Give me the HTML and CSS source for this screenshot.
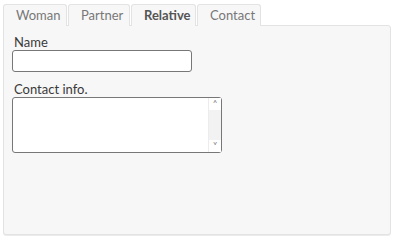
FILE: index.html
```html
<!DOCTYPE html>
<html>
<head>
<meta charset="utf-8">
<link rel="stylesheet" href="styles.css">
</head>
<body>
<div class="tabs">
  <div class="tablist">
    <div class="tab">Woman</div>
    <div class="tab">Partner</div>
    <div class="tab active">Relative</div>
    <div class="tab">Contact</div>
  </div>
  <div class="panel">
    <label class="label">Name</label>
    <input class="input" type="text">
    <label class="label label2">Contact info.</label>
    <div class="textarea">
      <div class="scroll">
        <span class="arrow">&#x2C4;</span>
        <span class="track"></span>
        <span class="arrow">&#x2C5;</span>
      </div>
    </div>
  </div>
</div>
</body>
</html>
```
FILE: styles.css
```css
* { box-sizing: border-box; }
html, body { margin: 0; background: #fff; }
body { padding: 3px 4px 5px 3px; font-family: Lato, "Open Sans", sans-serif; font-size: 13px; color: #444; }
.tabs { display: flex; flex-direction: column; height: 232px; }
.tablist { display: flex; padding-left: 0; }
.tab {
  height: 22px; padding: 0 12px; margin-right: 1px;
  border: 1px solid #e3e3e3; border-bottom: none; border-radius: 3px 3px 0 0;
  background: #f7f7f7; color: #777; line-height: 21px; text-align: center;
  position: relative; top: 1px;
}
.tab:nth-child(1) { width: 64px; }
.tab:nth-child(2) { width: 62px; }
.tab:nth-child(3) { width: 65px; }
.tab:nth-child(4) { width: 64px; }
.tab.active { font-weight: bold; color: #555; background: #f7f7f7; z-index: 1; height: 22px; }
.panel {
  flex: 1; border: 1px solid #e3e3e3; border-radius: 0 3px 3px 3px; background: #f7f7f7;
  padding: 9px 8px; display: flex; flex-direction: column; align-items: flex-start;
  box-shadow: 0 1px 0 #ececec;
}
.label { color: #3a3a3a; line-height: 14px; margin-left: 2px; }
.label2 { margin-top: 10px; }
.input { width: 180px; height: 22px; margin-top: 1px; border: 1px solid #777; border-radius: 3px; background: #fff; }
.textarea { width: 210px; height: 56px; margin-top: 1px; border: 1px solid #777; border-radius: 3px; background: #fff; display: flex; justify-content: flex-end; }
.scroll { width: 13px; display: flex; flex-direction: column; border-left: 1px solid #ececec; background: #fafafa; }
.arrow { height: 12px; font-size: 9px; line-height: 12px; text-align: center; color: #777; background: #fff; }
.track { flex: 1; background: #f2f2f2; }
```
